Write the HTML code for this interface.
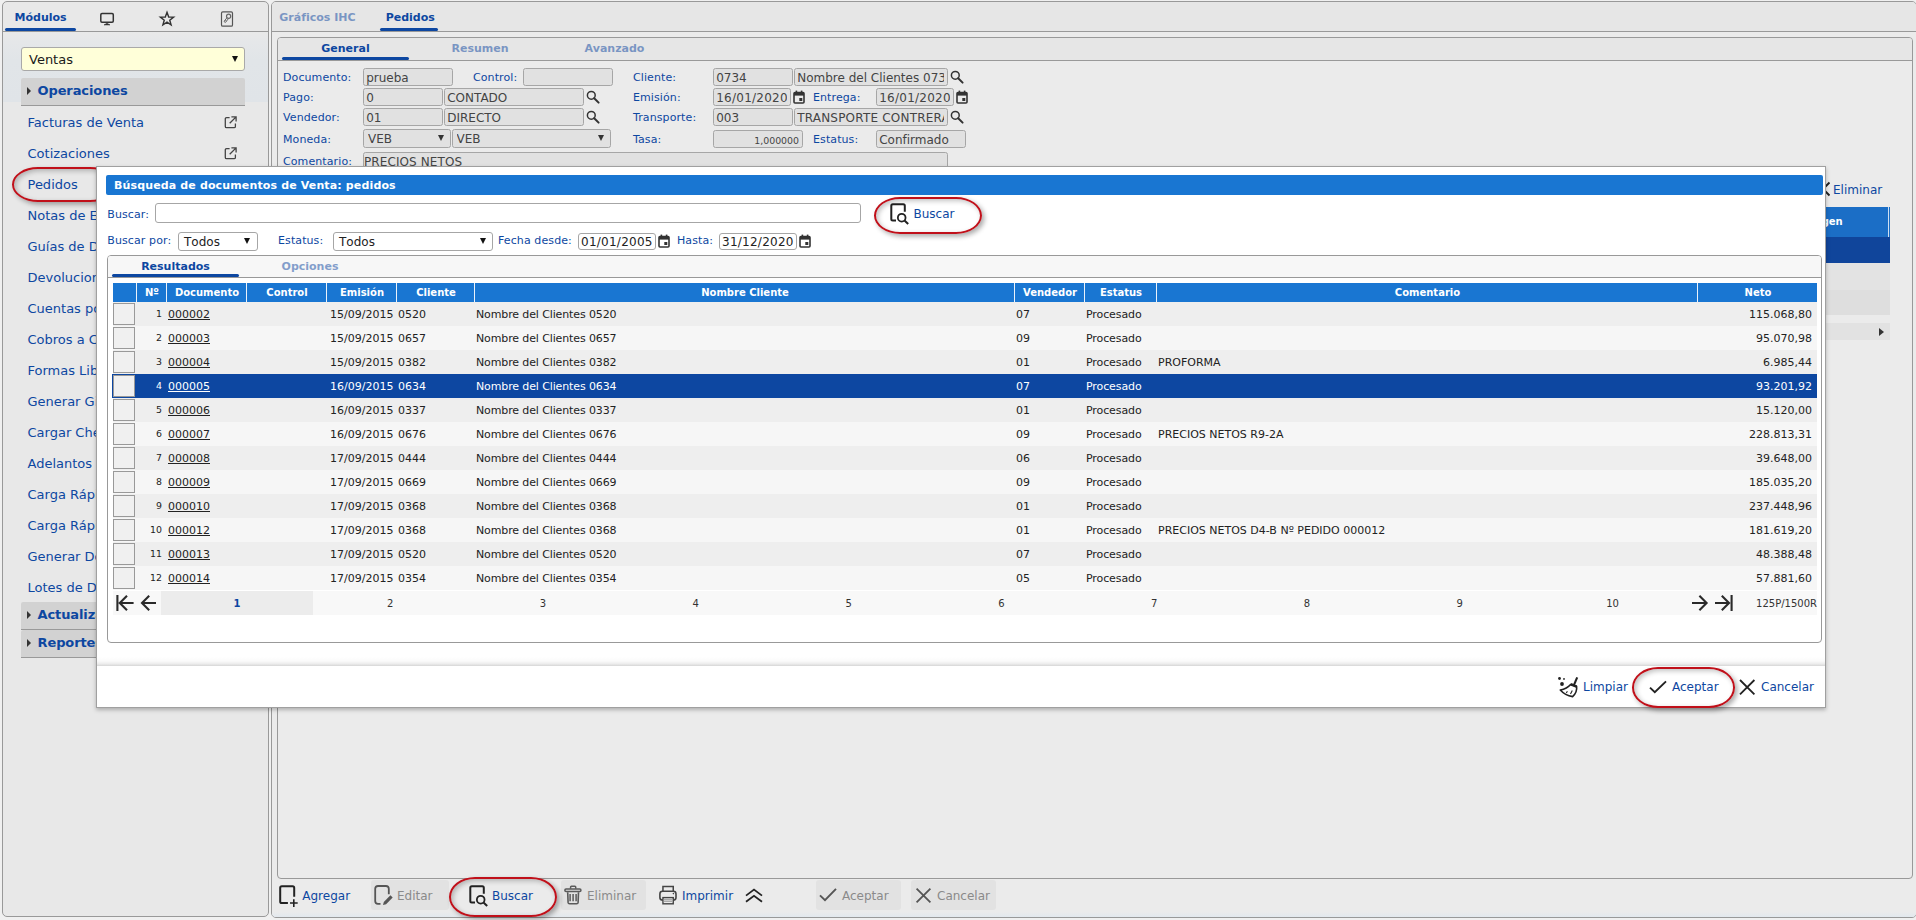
<!DOCTYPE html>
<html lang="es"><head><meta charset="utf-8"><title>Pedidos</title>
<style>
html,body{margin:0;padding:0}
body{width:1916px;height:920px;overflow:hidden;position:relative;background:#f0f0f0;font-family:"DejaVu Sans","Liberation Sans",sans-serif;font-size:11px;color:#222}
*{box-sizing:border-box}
.a{position:absolute}
.t{position:absolute;white-space:pre;line-height:1}
.b{font-weight:bold}
.blue{color:#0d47a1}
.f11{font-size:11px}.f13{font-size:13px}.f10{font-size:10px}.f12{font-size:12px}
.panel{position:absolute;border:1px solid #999;border-radius:5px;background:#ebebeb;overflow:hidden}
.hl{position:absolute;height:1px;background:#999}
.bar{position:absolute;height:3px;background:#0d47a1;border-radius:2px}
.inp{position:absolute;border:1px solid #a6a6a6;border-radius:2.5px;background:#e1e1e1;color:#444;font-size:13px;line-height:1;white-space:pre;overflow:hidden}
.inp span{position:absolute;left:2.2px;top:3px;right:3px;overflow:hidden;height:15px}
.lbl{position:absolute;white-space:pre;line-height:1;font-size:11px;color:#0d47a1;letter-spacing:.1px}
.mi{position:absolute;left:24.5px;white-space:pre;line-height:1;font-size:13px;color:#0d47a1;letter-spacing:0}
.tri{position:absolute;width:0;height:0;border-left:3.5px solid transparent;border-right:3.5px solid transparent;border-top:6px solid #111}
.ell{position:absolute;border:2px solid #c0101a;border-radius:26px/50%;box-shadow:2.5px 2.5px 5px rgba(0,0,0,.33), inset 2px 2px 5px rgba(0,0,0,.24)}
svg{position:absolute;overflow:visible}
.th{position:absolute;top:0;height:19px;color:#fff;font-weight:bold;font-size:10px;text-align:center;line-height:19px;border-left:1px solid #eaf2fb}
.row{position:absolute;left:113px;width:1704px;height:24px}
.row .c{position:absolute;top:7px;line-height:1;font-size:11px;white-space:pre;color:#222}
.row .n{position:absolute;top:7.4px;line-height:1;font-size:9.4px;white-space:pre;text-align:right;width:30px;left:19px;color:#222}
.row .ck{position:absolute;left:0;top:1px;width:22px;height:22px;border:1px solid #999;background:#f0f0f0}
.row u{text-decoration:underline}
.sel{background:#0d47a1;box-shadow:-1px 0 0 #0d47a1}
.sel .c,.sel .n{color:#fff}
.pg{position:absolute;top:0;height:24px;line-height:26.4px;font-size:10px;text-align:center;color:#333}

</style></head>
<body>
<div class="panel" id="left" style="left:2px;top:1px;width:267px;height:916px;background:#e8e8e8">
<div class="a" style="left:0;top:30px;width:265px;height:70px;background:linear-gradient(#e9e9e9 0,#e5e7e9 10px,#e1e5e8 28px,#e0e4e8 70px)"></div>
<div class="hl" style="left:0;top:29px;width:265px"></div>
<div class="t b blue f11" id="tmod" style="left:11.5px;top:10px">Módulos</div>
<div class="bar" style="left:2px;top:26px;width:71px"></div>
<svg style="left:96px;top:10px" width="16" height="15" viewBox="0 0 16 15"><rect x="1.8" y="1.6" width="12.5" height="8.6" rx="1.2" fill="none" stroke="#333" stroke-width="1.5"/><path d="M5 12.9 L8 11.3 L11 12.9 Z" fill="#333" stroke="#333" stroke-width=".6" stroke-linejoin="round"/></svg>
<svg style="left:155px;top:8px" width="18" height="17" viewBox="0 0 18 17"><path d="M9.00 2.30 L10.70 6.95 L15.66 7.14 L11.76 10.20 L13.11 14.96 L9.00 12.20 L4.89 14.96 L6.24 10.20 L2.34 7.14 L7.30 6.95 Z" fill="none" stroke="#333" stroke-width="1.4" stroke-linejoin="miter"/></svg>
<svg style="left:217px;top:8px" width="14" height="18" viewBox="0 0 14 18"><rect x="1.5" y="1.9" width="11" height="14.3" rx="1.3" fill="none" stroke="#555" stroke-width="1.2"/><circle cx="8.6" cy="6.2" r="2.1" fill="none" stroke="#666" stroke-width="1.2"/><path d="M7.1 7.6 L4 11.4 L5.4 12.5 L8.4 8.7 M5.2 10 L6.4 11" fill="none" stroke="#666" stroke-width="1"/></svg>
<div class="a" style="left:18px;top:45px;width:224px;height:24px;border:1px solid #a9a9a9;border-radius:3px;background:#ffffd9"></div>
<div class="t f13" style="left:26px;top:51px;color:#1a1a1a">Ventas</div>
<div class="tri" style="left:229px;top:54px"></div>
<div class="a" style="left:18px;top:76px;width:224px;height:28px;background:#d2d2d2;border-bottom:1px solid #999;border-radius:2px 2px 0 0"></div>
<div class="a" style="left:24px;top:85px;width:0;height:0;border-top:4px solid transparent;border-bottom:4px solid transparent;border-left:4.6px solid #333"></div>
<div class="t b blue f13" style="left:34.5px;top:82px;letter-spacing:-.1px">Operaciones</div>
<div class="mi" style="top:114px">Facturas de Venta</div>
<div class="mi" style="top:145px">Cotizaciones</div>
<div class="mi" style="top:176px">Pedidos</div>
<div class="mi" style="top:207px">Notas de Entrega</div>
<div class="mi" style="top:238px">Guías de Despacho</div>
<div class="mi" style="top:269px">Devoluciones</div>
<div class="mi" style="top:300px">Cuentas por Cobrar</div>
<div class="mi" style="top:331px">Cobros a Clientes</div>
<div class="mi" style="top:362px">Formas Libres</div>
<div class="mi" style="top:393px">Generar Giros</div>
<div class="mi" style="top:424px">Cargar Cheques</div>
<div class="mi" style="top:455px">Adelantos</div>
<div class="mi" style="top:486px">Carga Rápida</div>
<div class="mi" style="top:517px">Carga Rápida</div>
<div class="mi" style="top:548px">Generar Documentos</div>
<div class="mi" style="top:579px">Lotes de Documentos</div>
<svg style="left:221px;top:113.6px" width="13" height="13" viewBox="0 0 13 13"><path d="M5.6 1.6 H2.6 Q1.3 1.6 1.3 2.9 V10.4 Q1.3 11.7 2.6 11.7 H10.1 Q11.4 11.7 11.4 10.4 V7.4" fill="none" stroke="#444" stroke-width="1.3"/><path d="M7.4 0.9 H12.1 V5.6 M12.1 0.9 L5.7 7.3" fill="none" stroke="#444" stroke-width="1.3"/></svg>
<svg style="left:221px;top:144.6px" width="13" height="13" viewBox="0 0 13 13"><path d="M5.6 1.6 H2.6 Q1.3 1.6 1.3 2.9 V10.4 Q1.3 11.7 2.6 11.7 H10.1 Q11.4 11.7 11.4 10.4 V7.4" fill="none" stroke="#444" stroke-width="1.3"/><path d="M7.4 0.9 H12.1 V5.6 M12.1 0.9 L5.7 7.3" fill="none" stroke="#444" stroke-width="1.3"/></svg>
<div class="ell" style="left:9px;top:165px;width:104px;height:35px"></div>
<div class="a" style="left:18px;top:600px;width:224px;height:28px;background:#d2d2d2;border-bottom:1px solid #999;border-radius:2px 2px 0 0"></div>
<div class="a" style="left:24px;top:609px;width:0;height:0;border-top:4px solid transparent;border-bottom:4px solid transparent;border-left:4.6px solid #333"></div>
<div class="t b blue f13" style="left:34.5px;top:606px;letter-spacing:-.1px">Actualizaciones</div>
<div class="a" style="left:18px;top:628px;width:224px;height:28px;background:#d2d2d2;border-bottom:1px solid #999;border-radius:2px 2px 0 0"></div>
<div class="a" style="left:24px;top:637px;width:0;height:0;border-top:4px solid transparent;border-bottom:4px solid transparent;border-left:4.6px solid #333"></div>
<div class="t b blue f13" style="left:34.5px;top:634px;letter-spacing:-.1px">Reportes</div>
</div>
<div class="panel" id="main" style="left:271px;top:1px;width:1646px;height:917px">
<div class="a" style="left:0;top:0;width:1644px;height:29px;background:#e6e6e6"></div>
<div class="hl" style="left:0;top:29px;width:1644px"></div>
<div class="t b blue f11" style="left:7.3px;top:10px;opacity:.5">Gráficos IHC</div>
<div class="t b blue f11" style="left:113.7px;top:10px">Pedidos</div>
<div class="bar" style="left:108px;top:26px;width:58px"></div>
<div class="a" style="left:0;top:910px;width:1644px;height:5px;background:linear-gradient(#ebebeb,#e2e8ee)"></div>
</div>
<div class="panel" id="inner" style="left:277px;top:37px;width:1636px;height:842px;border-radius:4px;background:#ebebeb">
<div class="a" style="left:0;top:0;width:1634px;height:22px;background:#e6e6e6"></div>
<div class="hl" style="left:0;top:22px;width:1634px"></div>
<div class="bar" style="left:4px;top:19px;width:127px"></div>
<div class="t b blue f11" style="left:7.5px;width:120px;text-align:center;top:5px;opacity:1">General</div>
<div class="t b blue f11" style="left:142px;width:120px;text-align:center;top:5px;opacity:0.5">Resumen</div>
<div class="t b blue f11" style="left:276.5px;width:120px;text-align:center;top:5px;opacity:0.5">Avanzado</div>
<div class="lbl" style="left:5px;top:34px">Documento:</div>
<div class="inp" style="left:85px;top:30px;width:90px;height:18px;font-size:12px;"><span style="">prueba</span></div>
<div class="lbl" style="left:195px;top:34px">Control:</div>
<div class="inp" style="left:245px;top:30px;width:90px;height:18px;font-size:12px;"></div>
<div class="lbl" style="left:355px;top:34px">Cliente:</div>
<div class="inp" style="left:435px;top:30px;width:80px;height:18px;font-size:12px;"><span style="">0734</span></div>
<div class="inp" style="left:516px;top:30px;width:154px;height:18px;font-size:12px;"><span style="">Nombre del Clientes 0734</span></div>
<div class="lbl" style="left:5px;top:54px">Pago:</div>
<div class="inp" style="left:85px;top:50px;width:80px;height:18px;font-size:12px;"><span style="">0</span></div>
<div class="inp" style="left:166px;top:50px;width:140px;height:18px;font-size:12px;"><span style="">CONTADO</span></div>
<div class="lbl" style="left:355px;top:54px">Emisión:</div>
<div class="inp" style="left:435px;top:50px;width:78px;height:18px;font-size:12px;"><span style="letter-spacing:.25px">16/01/2020</span></div>
<div class="lbl" style="left:535px;top:54px">Entrega:</div>
<div class="inp" style="left:598px;top:50px;width:78px;height:18px;font-size:12px;"><span style="letter-spacing:.25px">16/01/2020</span></div>
<div class="lbl" style="left:5px;top:74px">Vendedor:</div>
<div class="inp" style="left:85px;top:70px;width:80px;height:18px;font-size:12px;"><span style="">01</span></div>
<div class="inp" style="left:166px;top:70px;width:140px;height:18px;font-size:12px;"><span style="">DIRECTO</span></div>
<div class="lbl" style="left:355px;top:74px">Transporte:</div>
<div class="inp" style="left:435px;top:70px;width:80px;height:18px;font-size:12px;"><span style="">003</span></div>
<div class="inp" style="left:516px;top:70px;width:154px;height:18px;font-size:12px;"><span style="letter-spacing:.2px">TRANSPORTE CONTRERAS</span></div>
<div class="lbl" style="left:5px;top:96px">Moneda:</div>
<div class="inp" style="left:85px;top:91px;width:88px;height:19px;font-size:12px;"><span style="left:4px;top:3px">VEB</span></div>
<div class="inp" style="left:173.5px;top:91px;width:159.5px;height:19px;font-size:12px;"><span style="left:4px;top:3px">VEB</span></div>
<div class="tri" style="left:160px;top:97px;border-top-color:#333"></div>
<div class="tri" style="left:320px;top:97px;border-top-color:#333"></div>
<div class="lbl" style="left:355px;top:96px">Tasa:</div>
<div class="inp" style="left:435px;top:92px;width:90px;height:18px;font-size:9.4px;"><span style="left:auto;right:3px;overflow:visible;top:4.5px">1,000000</span></div>
<div class="lbl" style="left:535px;top:96px">Estatus:</div>
<div class="inp" style="left:598px;top:92px;width:90px;height:18px;font-size:12px;"><span style="">Confirmado</span></div>
<div class="lbl" style="left:5px;top:118px">Comentario:</div>
<div class="inp" style="left:85px;top:114px;width:585px;height:18px;font-size:12px;"><span style="left:0px;letter-spacing:.1px">PRECIOS NETOS</span></div>
<svg style="left:308px;top:51.6px" width="14" height="14" viewBox="0 0 14 14"><circle cx="5.3" cy="5.3" r="3.9" fill="none" stroke="#333" stroke-width="1.5"/><path d="M8.2 8.2 L12.6 12.6" stroke="#333" stroke-width="2" stroke-linecap="round"/></svg>
<svg style="left:308px;top:71.6px" width="14" height="14" viewBox="0 0 14 14"><circle cx="5.3" cy="5.3" r="3.9" fill="none" stroke="#333" stroke-width="1.5"/><path d="M8.2 8.2 L12.6 12.6" stroke="#333" stroke-width="2" stroke-linecap="round"/></svg>
<svg style="left:672px;top:31.6px" width="14" height="14" viewBox="0 0 14 14"><circle cx="5.3" cy="5.3" r="3.9" fill="none" stroke="#333" stroke-width="1.5"/><path d="M8.2 8.2 L12.6 12.6" stroke="#333" stroke-width="2" stroke-linecap="round"/></svg>
<svg style="left:672px;top:71.6px" width="14" height="14" viewBox="0 0 14 14"><circle cx="5.3" cy="5.3" r="3.9" fill="none" stroke="#333" stroke-width="1.5"/><path d="M8.2 8.2 L12.6 12.6" stroke="#333" stroke-width="2" stroke-linecap="round"/></svg>
<svg style="left:515px;top:52px" width="12" height="14" viewBox="0 0 12 14"><rect x="1" y="2.6" width="10" height="10.4" rx="1" fill="none" stroke="#333" stroke-width="1.6"/><rect x="1" y="2.6" width="10" height="3" fill="#333"/><rect x="2.6" y="0.6" width="1.6" height="3" fill="#333"/><rect x="7.8" y="0.6" width="1.6" height="3" fill="#333"/><rect x="6.3" y="8" width="3" height="3" fill="#333"/></svg>
<svg style="left:678px;top:52px" width="12" height="14" viewBox="0 0 12 14"><rect x="1" y="2.6" width="10" height="10.4" rx="1" fill="none" stroke="#333" stroke-width="1.6"/><rect x="1" y="2.6" width="10" height="3" fill="#333"/><rect x="2.6" y="0.6" width="1.6" height="3" fill="#333"/><rect x="7.8" y="0.6" width="1.6" height="3" fill="#333"/><rect x="6.3" y="8" width="3" height="3" fill="#333"/></svg>
<svg style="left:1537.6px;top:144px" width="14" height="14" viewBox="0 0 14 14"><path d="M0.5 0.5 L13.5 13.5 M13.5 0.5 L0.5 13.5" stroke="#222" stroke-width="1.9"/></svg>
<div class="t f12 blue" style="left:1555px;top:146px">Eliminar</div>
<div class="a" style="left:1022px;top:169px;width:590px;height:30px;background:#1b6ec6;box-shadow:inset -1px 0 0 #1e6fc5, inset -2px 0 0 #cfe0f3"></div>
<div class="t b f10" style="left:1522px;top:179px;color:#fff">Margen</div>
<div class="a" style="left:1022px;top:199px;width:590px;height:26px;background:#10459b"></div>
<div class="a" style="left:1022px;top:225px;width:590px;height:27px;background:#e3e3e3"></div>
<div class="a" style="left:1022px;top:252px;width:590px;height:25px;background:#dedede"></div>
<div class="a" style="left:1022px;top:285px;width:590px;height:17px;background:#e2e2e2"></div>
<div class="a" style="left:1601px;top:290px;width:0;height:0;border-top:4px solid transparent;border-bottom:4px solid transparent;border-left:5px solid #333"></div>
</div>
<div class="t f12" style="left:302.3px;top:890px;color:#0d47a1">Agregar</div>
<div class="a" style="left:371px;top:880px;width:78px;height:30px;background:#e2e2e2;border-radius:3px"></div>
<div class="t f12" style="left:397px;top:890px;color:#8a8a8a">Editar</div>
<div class="t f12" style="left:492px;top:890px;color:#0d47a1">Buscar</div>
<div class="a" style="left:561px;top:880px;width:85px;height:30px;background:#e2e2e2;border-radius:3px"></div>
<div class="t f12" style="left:587px;top:890px;color:#8a8a8a">Eliminar</div>
<div class="t f12" style="left:682px;top:890px;color:#0d47a1">Imprimir</div>
<div class="a" style="left:816px;top:880px;width:85px;height:30px;background:#e2e2e2;border-radius:3px"></div>
<div class="t f12" style="left:842px;top:890px;color:#8a8a8a">Aceptar</div>
<div class="a" style="left:911px;top:880px;width:85px;height:30px;background:#e2e2e2;border-radius:3px"></div>
<div class="t f12" style="left:937px;top:890px;color:#8a8a8a">Cancelar</div>
<svg style="left:278px;top:884px" width="22" height="24" viewBox="0 0 22 24"><path d="M16.2 12.7 V3.8 Q16.2 2.2 14.6 2.2 H3.8 Q2.2 2.2 2.2 3.8 V17.5 Q2.2 19.1 3.8 19.1 H9.9" fill="none" stroke="#222" stroke-width="2"/><path d="M15.8 15.3 V22.9 M12 19 H19.7" stroke="#222" stroke-width="1.6"/></svg>
<svg style="left:373px;top:884px" width="22" height="24" viewBox="0 0 22 24"><path d="M15.8 10.3 V4.8 Q15.8 2 13 2 H5 Q2.2 2 2.2 4.8 V17.1 Q2.2 19.9 5 19.9 H7.5" fill="none" stroke="#555" stroke-width="1.8"/><path d="M19.7 13.6 L17.4 11.3 L10.8 17.9 L10 21 L13.1 20.2 Z" fill="#555"/></svg>
<svg style="left:467px;top:884px" width="22" height="24" viewBox="0 0 22 24"><path d="M16.8 9.8 V3.8 Q16.8 2.3 15.3 2.3 H4.8 Q3.3 2.3 3.3 3.8 V17.1 Q3.3 18.6 4.8 18.6 H8" fill="none" stroke="#222" stroke-width="2"/><circle cx="13.7" cy="15.7" r="3.85" fill="none" stroke="#222" stroke-width="1.8"/><path d="M16.5 18.5 L20.2 22" stroke="#222" stroke-width="2"/></svg>
<svg style="left:563px;top:884px" width="20" height="24" viewBox="0 0 20 24"><path d="M7.6 4.8 V3 Q7.6 2.2 8.4 2.2 H11.9 Q12.7 2.2 12.7 3 V4.8" fill="none" stroke="#5a5a5a" stroke-width="1.5"/><rect x="1.85" y="4.95" width="16.1" height="2.6" rx="1.2" fill="none" stroke="#5a5a5a" stroke-width="1.5"/><path d="M4.7 8.2 L5.1 18.4 Q5.2 19.8 6.6 19.8 H13.6 Q15 19.8 15.1 18.4 L15.5 8.2" fill="none" stroke="#5a5a5a" stroke-width="1.6"/><path d="M7.1 10 V17.2 M10.1 10 V17.2 M13.1 10 V17.2" stroke="#5a5a5a" stroke-width="1.5"/></svg>
<svg style="left:657px;top:884px" width="22" height="22" viewBox="0 0 22 22"><path d="M5.95 7.3 V2.55 H16.25 V7.3" fill="none" stroke="#444" stroke-width="1.5"/><rect x="2.9" y="7.3" width="16.1" height="8.7" rx="2.6" fill="none" stroke="#444" stroke-width="1.6"/><rect x="5.95" y="13.6" width="10.3" height="6.2" fill="#ebebeb" stroke="#444" stroke-width="1.4"/><path d="M6.8 15.6 H15.4 M6.8 17.3 H15.4" stroke="#aaa" stroke-width="1.2"/><circle cx="16.4" cy="9.6" r=".8" fill="#444"/></svg>
<svg style="left:744px;top:887px" width="20" height="17" viewBox="0 0 20 17"><path d="M2 8.6 L10 2.6 L18 8.6 M2 14.8 L10 8.8 L18 14.8" fill="none" stroke="#222" stroke-width="1.8"/></svg>
<svg style="left:818px;top:886px" width="20" height="17" viewBox="0 0 20 17"><path d="M2 9.4 L7 14.2 L18 2.8" fill="none" stroke="#555" stroke-width="1.9"/></svg>
<svg style="left:915px;top:887px" width="17" height="17" viewBox="0 0 17 17"><path d="M1.6 1.6 L15.4 15.4 M15.4 1.6 L1.6 15.4" fill="none" stroke="#555" stroke-width="1.8"/></svg>
<div class="ell" style="left:449px;top:877px;width:108px;height:40px"></div>
<div class="a" id="dlg" style="left:96px;top:166px;width:1730px;height:542px;background:#fff;border:1px solid #a0a0a0;box-shadow:0 2px 4px rgba(0,0,0,.26)">
<div class="a" style="left:9px;top:8px;width:1717px;height:20px;background:#1976d2;border-radius:2px"></div>
<div class="t b f11" style="left:17px;top:13px;color:#fff;letter-spacing:.14px">Búsqueda de documentos de Venta: pedidos</div>
<div class="lbl" style="left:10.299999999999997px;top:42px">Buscar:</div>
<div class="a" style="left:58px;top:36px;width:706px;height:20px;border:1px solid #a6a6a6;border-radius:3px;background:#fff"></div>
<svg style="left:791px;top:35px" width="22" height="24" viewBox="0 0 22 24"><path d="M16.8 9.8 V3.8 Q16.8 2.3 15.3 2.3 H4.8 Q3.3 2.3 3.3 3.8 V17.1 Q3.3 18.6 4.8 18.6 H8" fill="none" stroke="#222" stroke-width="2"/><circle cx="13.7" cy="15.7" r="3.85" fill="none" stroke="#222" stroke-width="1.8"/><path d="M16.5 18.5 L20.2 22" stroke="#222" stroke-width="2"/></svg>
<div class="t f12 blue" style="left:816.5px;top:41px">Buscar</div>
<div class="ell" style="left:777px;top:29.5px;width:108px;height:37px"></div>
<div class="lbl" style="left:10.299999999999997px;top:68px">Buscar por:</div>
<div class="a" style="left:81px;top:65px;width:80px;height:19px;border:1px solid #a6a6a6;border-radius:3px;background:#fff"></div>
<div class="t f12" style="left:87px;top:69px;color:#222;font-kerning:none">Todos</div>
<div class="tri" style="left:147px;top:71px"></div>
<div class="lbl" style="left:181px;top:68px">Estatus:</div>
<div class="a" style="left:236px;top:65px;width:160px;height:19px;border:1px solid #a6a6a6;border-radius:3px;background:#fff"></div>
<div class="t f12" style="left:242px;top:69px;color:#222;font-kerning:none">Todos</div>
<div class="tri" style="left:383px;top:71px"></div>
<div class="lbl" style="left:401px;top:68px">Fecha desde:</div>
<div class="a" style="left:481px;top:66px;width:78px;height:17px;border:1px solid #a6a6a6;border-radius:3px;background:#fff"></div>
<div class="t f12" style="left:484px;top:69px;color:#222;letter-spacing:.25px">01/01/2005</div>
<svg style="left:561px;top:67px" width="12" height="14" viewBox="0 0 12 14"><rect x="1" y="2.6" width="10" height="10.4" rx="1" fill="none" stroke="#333" stroke-width="1.6"/><rect x="1" y="2.6" width="10" height="3" fill="#333"/><rect x="2.6" y="0.6" width="1.6" height="3" fill="#333"/><rect x="7.8" y="0.6" width="1.6" height="3" fill="#333"/><rect x="6.3" y="8" width="3" height="3" fill="#333"/></svg>
<div class="lbl" style="left:580px;top:68px">Hasta:</div>
<div class="a" style="left:622px;top:66px;width:78px;height:17px;border:1px solid #a6a6a6;border-radius:3px;background:#fff"></div>
<div class="t f12" style="left:625px;top:69px;color:#222;letter-spacing:.25px">31/12/2020</div>
<svg style="left:702px;top:67px" width="12" height="14" viewBox="0 0 12 14"><rect x="1" y="2.6" width="10" height="10.4" rx="1" fill="none" stroke="#333" stroke-width="1.6"/><rect x="1" y="2.6" width="10" height="3" fill="#333"/><rect x="2.6" y="0.6" width="1.6" height="3" fill="#333"/><rect x="7.8" y="0.6" width="1.6" height="3" fill="#333"/><rect x="6.3" y="8" width="3" height="3" fill="#333"/></svg>
<div class="a" style="left:10px;top:88px;width:1715px;height:388px;border:1px solid #999;border-radius:4px;background:#fff;overflow:hidden"><div class="a" style="left:0;top:0;width:100%;height:21px;background:#f7f7f7"></div><div class="hl" style="left:0;top:21px;width:100%"></div></div>
<div class="bar" style="left:15px;top:107px;width:127px"></div>
<div class="t b blue f11" style="left:18.5px;width:120px;text-align:center;top:94px">Resultados</div>
<div class="t b blue f11" style="left:153px;width:120px;text-align:center;top:94px;opacity:.5">Opciones</div>
<div class="a" style="left:16px;top:116px;width:1704px;height:19px;background:#1976d2">
<div class="th" style="left:0px;width:24px;border-left:none;"></div>
<div class="th" style="left:23px;width:31px;">Nº</div>
<div class="th" style="left:53px;width:81px;">Documento</div>
<div class="th" style="left:133px;width:81px;">Control</div>
<div class="th" style="left:213px;width:71px;">Emisión</div>
<div class="th" style="left:283px;width:79px;">Cliente</div>
<div class="th" style="left:361px;width:541px;">Nombre Cliente</div>
<div class="th" style="left:901px;width:71px;">Vendedor</div>
<div class="th" style="left:971px;width:73px;">Estatus</div>
<div class="th" style="left:1043px;width:542px;">Comentario</div>
<div class="th" style="left:1584px;width:121px;">Neto</div>
</div>
<div class="row" style="top:135px;left:16px;background:#eeeeee;"><div class="ck"></div><div class="n">1</div><div class="c" style="left:55px"><u>000002</u></div><div class="c" style="left:217px">15/09/2015</div><div class="c" style="left:285px">0520</div><div class="c" style="left:363px;letter-spacing:-.12px">Nombre del Clientes 0520</div><div class="c" style="left:903px">07</div><div class="c" style="left:973px;letter-spacing:-.1px">Procesado</div><div class="c" style="left:1045px"></div><div class="c" style="right:5px">115.068,80</div></div>
<div class="row" style="top:159px;left:16px;background:#f6f6f6;"><div class="ck"></div><div class="n">2</div><div class="c" style="left:55px"><u>000003</u></div><div class="c" style="left:217px">15/09/2015</div><div class="c" style="left:285px">0657</div><div class="c" style="left:363px;letter-spacing:-.12px">Nombre del Clientes 0657</div><div class="c" style="left:903px">09</div><div class="c" style="left:973px;letter-spacing:-.1px">Procesado</div><div class="c" style="left:1045px"></div><div class="c" style="right:5px">95.070,98</div></div>
<div class="row" style="top:183px;left:16px;background:#eeeeee;"><div class="ck"></div><div class="n">3</div><div class="c" style="left:55px"><u>000004</u></div><div class="c" style="left:217px">15/09/2015</div><div class="c" style="left:285px">0382</div><div class="c" style="left:363px;letter-spacing:-.12px">Nombre del Clientes 0382</div><div class="c" style="left:903px">01</div><div class="c" style="left:973px;letter-spacing:-.1px">Procesado</div><div class="c" style="left:1045px">PROFORMA</div><div class="c" style="right:5px">6.985,44</div></div>
<div class="row sel" style="top:207px;left:16px;"><div class="ck"></div><div class="n">4</div><div class="c" style="left:55px"><u>000005</u></div><div class="c" style="left:217px">16/09/2015</div><div class="c" style="left:285px">0634</div><div class="c" style="left:363px;letter-spacing:-.12px">Nombre del Clientes 0634</div><div class="c" style="left:903px">07</div><div class="c" style="left:973px;letter-spacing:-.1px">Procesado</div><div class="c" style="left:1045px"></div><div class="c" style="right:5px">93.201,92</div></div>
<div class="row" style="top:231px;left:16px;background:#eeeeee;"><div class="ck"></div><div class="n">5</div><div class="c" style="left:55px"><u>000006</u></div><div class="c" style="left:217px">16/09/2015</div><div class="c" style="left:285px">0337</div><div class="c" style="left:363px;letter-spacing:-.12px">Nombre del Clientes 0337</div><div class="c" style="left:903px">01</div><div class="c" style="left:973px;letter-spacing:-.1px">Procesado</div><div class="c" style="left:1045px"></div><div class="c" style="right:5px">15.120,00</div></div>
<div class="row" style="top:255px;left:16px;background:#f6f6f6;"><div class="ck"></div><div class="n">6</div><div class="c" style="left:55px"><u>000007</u></div><div class="c" style="left:217px">16/09/2015</div><div class="c" style="left:285px">0676</div><div class="c" style="left:363px;letter-spacing:-.12px">Nombre del Clientes 0676</div><div class="c" style="left:903px">09</div><div class="c" style="left:973px;letter-spacing:-.1px">Procesado</div><div class="c" style="left:1045px">PRECIOS NETOS R9-2A</div><div class="c" style="right:5px">228.813,31</div></div>
<div class="row" style="top:279px;left:16px;background:#eeeeee;"><div class="ck"></div><div class="n">7</div><div class="c" style="left:55px"><u>000008</u></div><div class="c" style="left:217px">17/09/2015</div><div class="c" style="left:285px">0444</div><div class="c" style="left:363px;letter-spacing:-.12px">Nombre del Clientes 0444</div><div class="c" style="left:903px">06</div><div class="c" style="left:973px;letter-spacing:-.1px">Procesado</div><div class="c" style="left:1045px"></div><div class="c" style="right:5px">39.648,00</div></div>
<div class="row" style="top:303px;left:16px;background:#f6f6f6;"><div class="ck"></div><div class="n">8</div><div class="c" style="left:55px"><u>000009</u></div><div class="c" style="left:217px">17/09/2015</div><div class="c" style="left:285px">0669</div><div class="c" style="left:363px;letter-spacing:-.12px">Nombre del Clientes 0669</div><div class="c" style="left:903px">09</div><div class="c" style="left:973px;letter-spacing:-.1px">Procesado</div><div class="c" style="left:1045px"></div><div class="c" style="right:5px">185.035,20</div></div>
<div class="row" style="top:327px;left:16px;background:#eeeeee;"><div class="ck"></div><div class="n">9</div><div class="c" style="left:55px"><u>000010</u></div><div class="c" style="left:217px">17/09/2015</div><div class="c" style="left:285px">0368</div><div class="c" style="left:363px;letter-spacing:-.12px">Nombre del Clientes 0368</div><div class="c" style="left:903px">01</div><div class="c" style="left:973px;letter-spacing:-.1px">Procesado</div><div class="c" style="left:1045px"></div><div class="c" style="right:5px">237.448,96</div></div>
<div class="row" style="top:351px;left:16px;background:#f6f6f6;"><div class="ck"></div><div class="n">10</div><div class="c" style="left:55px"><u>000012</u></div><div class="c" style="left:217px">17/09/2015</div><div class="c" style="left:285px">0368</div><div class="c" style="left:363px;letter-spacing:-.12px">Nombre del Clientes 0368</div><div class="c" style="left:903px">01</div><div class="c" style="left:973px;letter-spacing:-.1px">Procesado</div><div class="c" style="left:1045px">PRECIOS NETOS D4-B Nº PEDIDO 000012</div><div class="c" style="right:5px">181.619,20</div></div>
<div class="row" style="top:375px;left:16px;background:#eeeeee;"><div class="ck"></div><div class="n">11</div><div class="c" style="left:55px"><u>000013</u></div><div class="c" style="left:217px">17/09/2015</div><div class="c" style="left:285px">0520</div><div class="c" style="left:363px;letter-spacing:-.12px">Nombre del Clientes 0520</div><div class="c" style="left:903px">07</div><div class="c" style="left:973px;letter-spacing:-.1px">Procesado</div><div class="c" style="left:1045px"></div><div class="c" style="right:5px">48.388,48</div></div>
<div class="row" style="top:399px;left:16px;background:#f6f6f6;"><div class="ck"></div><div class="n">12</div><div class="c" style="left:55px"><u>000014</u></div><div class="c" style="left:217px">17/09/2015</div><div class="c" style="left:285px">0354</div><div class="c" style="left:363px;letter-spacing:-.12px">Nombre del Clientes 0354</div><div class="c" style="left:903px">05</div><div class="c" style="left:973px;letter-spacing:-.1px">Procesado</div><div class="c" style="left:1045px"></div><div class="c" style="right:5px">57.881,60</div></div>
<div class="a" style="left:16px;top:424px;width:1704px;height:24px;background:#f8f8f8">
<div class="pg" style="left:48.0px;width:152.8px;background:#ececec;color:#0d47a1;font-weight:bold;width:152px;">1</div>
<div class="pg" style="left:200.8px;width:152.8px;">2</div>
<div class="pg" style="left:353.6px;width:152.8px;">3</div>
<div class="pg" style="left:506.4px;width:152.8px;">4</div>
<div class="pg" style="left:659.2px;width:152.8px;">5</div>
<div class="pg" style="left:812.0px;width:152.8px;">6</div>
<div class="pg" style="left:964.8px;width:152.8px;">7</div>
<div class="pg" style="left:1117.6px;width:152.8px;">8</div>
<div class="pg" style="left:1270.4px;width:152.8px;">9</div>
<div class="pg" style="left:1423.2px;width:152.8px;">10</div>
<div class="pg" style="left:1637px;width:67px;text-align:right">125P/1500R</div>
<svg style="left:1px;top:3.6px" width="20" height="16" viewBox="0 0 20 16"><path d="M3.4 0 V16 M19.6 8 H5.8 M13 0.8 L5.8 8 L13 15.2" fill="none" stroke="#2a2a2a" stroke-width="2.1"/></svg>
<svg style="left:26px;top:3.6px" width="20" height="16" viewBox="0 0 20 16"><path d="M17 8 H3 M10.2 0.8 L3 8 L10.2 15.2" fill="none" stroke="#2a2a2a" stroke-width="2.1"/></svg>
<svg style="left:1576px;top:3.6px" width="20" height="16" viewBox="0 0 20 16"><path d="M3 8 H17.6 M10.4 0.8 L17.6 8 L10.4 15.2" fill="none" stroke="#2a2a2a" stroke-width="2.1"/></svg>
<svg style="left:1601px;top:3.6px" width="20" height="16" viewBox="0 0 20 16"><path d="M17.6 0 V16 M1 8 H15 M7.8 0.8 L15 8 L7.8 15.2" fill="none" stroke="#2a2a2a" stroke-width="2.1"/></svg>
</div>
<div class="a" style="left:0;top:490px;width:100%;height:9px;background:linear-gradient(rgba(0,0,0,0),rgba(0,0,0,.02) 45%,rgba(0,0,0,.07) 75%,rgba(0,0,0,.16))"></div>
<div class="t f12 blue" style="left:1486px;top:514px">Limpiar</div>
<div class="t f12 blue" style="left:1575px;top:514px">Aceptar</div>
<div class="t f12 blue" style="left:1664px;top:514px">Cancelar</div>
<svg style="left:1459px;top:508px" width="24" height="24" viewBox="0 0 24 24"><path d="M21.2 2.4 L18 9.8" stroke="#222" stroke-width="2.1" fill="none"/><path d="M14.6 9.4 Q11 13.6 4.3 15 Q9 20.4 16.6 21.6 Q21.4 17 20.6 11.3 Z" fill="none" stroke="#222" stroke-width="1.6" stroke-linejoin="round"/><path d="M14.8 9.3 L20.5 11.6" stroke="#222" stroke-width="2.6" fill="none"/><path d="M11.4 16.2 L10.3 18 M16.3 15.5 L14.5 19" stroke="#222" stroke-width="1.1"/><circle cx="3.5" cy="3.5" r="1.4" fill="#222"/><circle cx="8" cy="3.9" r=".95" fill="#222"/><circle cx="6" cy="9" r="1.9" fill="#222"/></svg>
<svg style="left:1551px;top:512px" width="20" height="16" viewBox="0 0 20 16"><path d="M2 8.6 L6.8 13.2 L18 2.4" fill="none" stroke="#222" stroke-width="1.9"/></svg>
<svg style="left:1641px;top:511px" width="18" height="18" viewBox="0 0 18 18"><path d="M2 2 L16.4 16.4 M16.4 2 L2 16.4" fill="none" stroke="#222" stroke-width="1.8"/></svg>
<div class="ell" style="left:1535px;top:500.4px;width:103px;height:40.6px"></div>
</div>
</body></html>
